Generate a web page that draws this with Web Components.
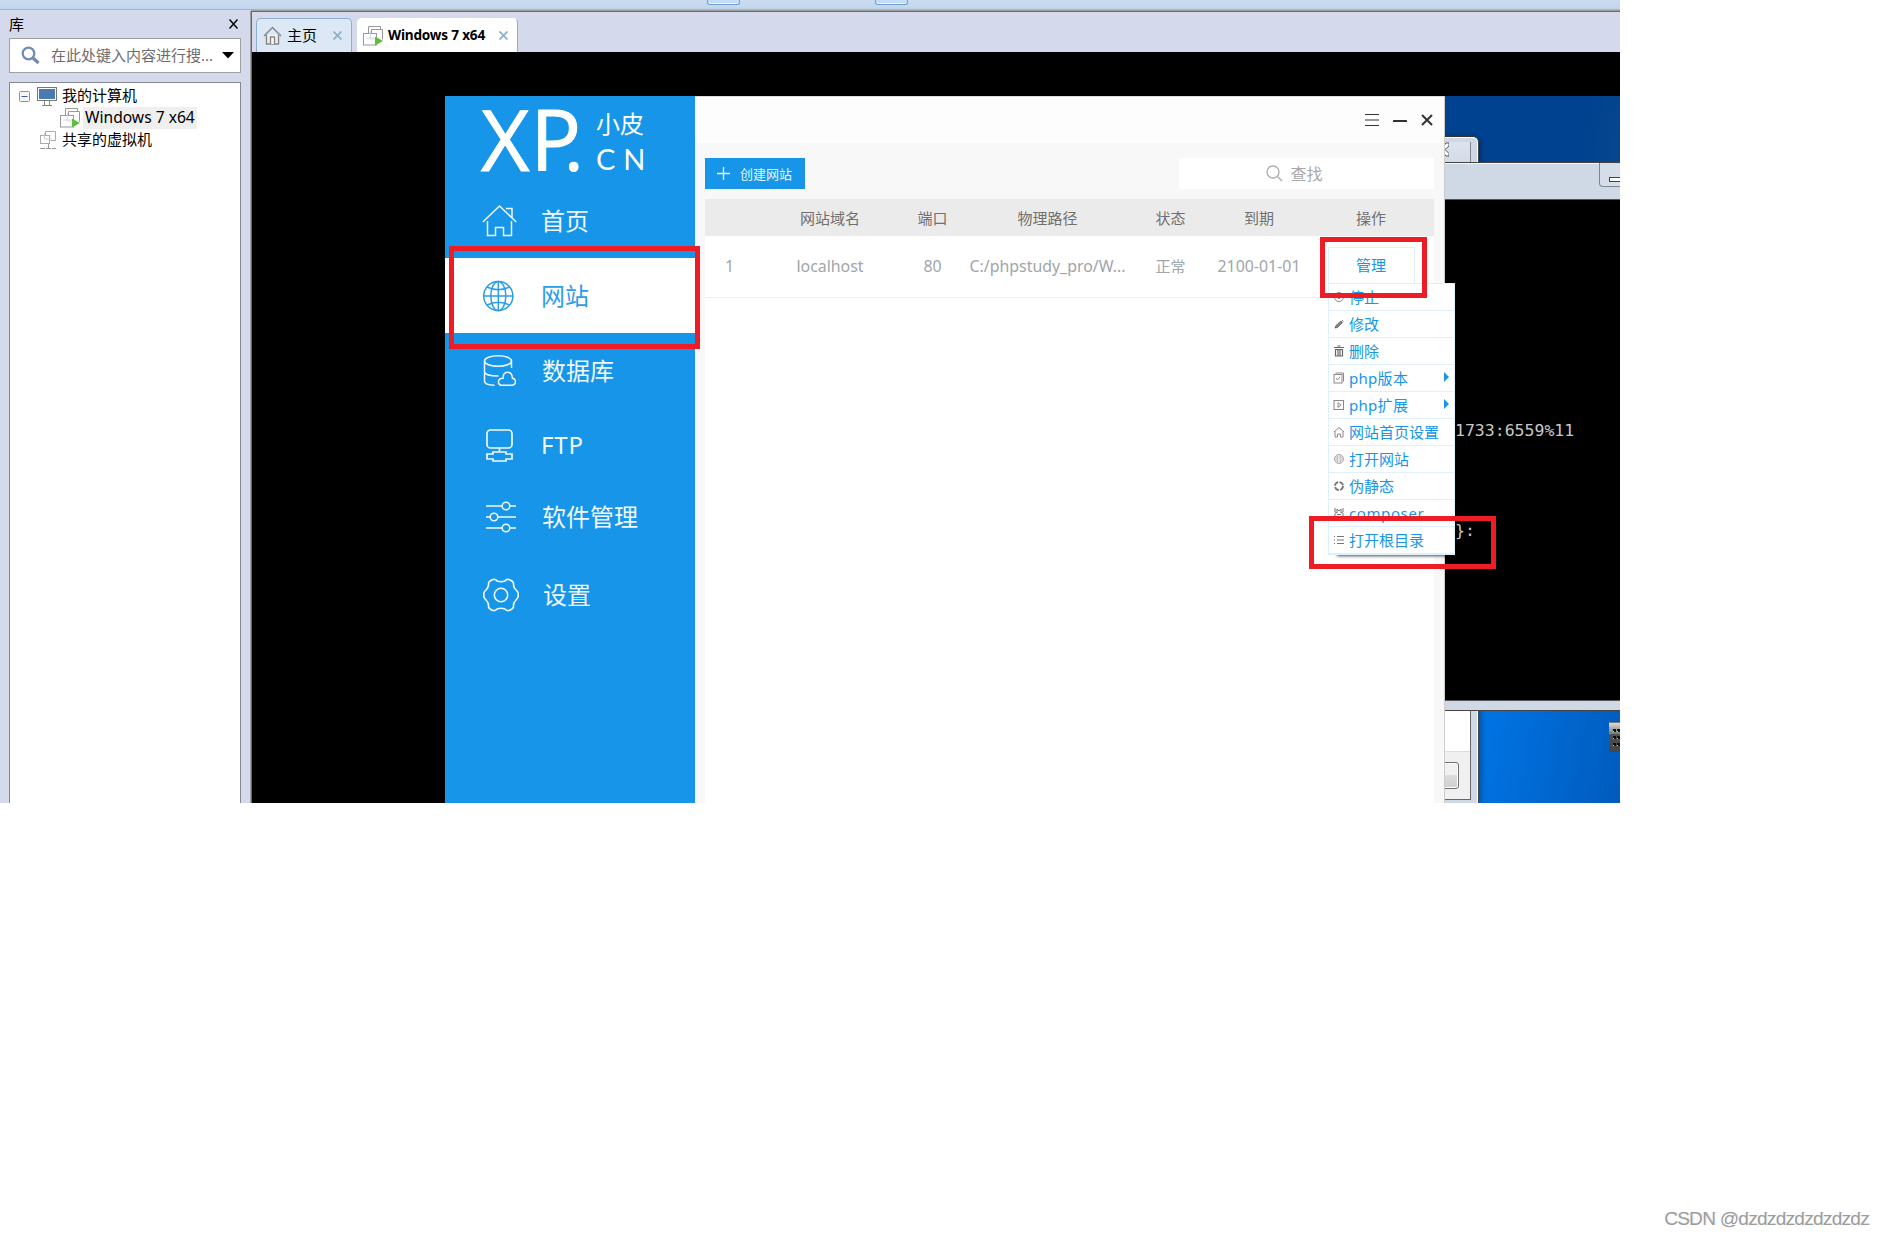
<!DOCTYPE html>
<html lang="zh-CN">
<head>
<meta charset="UTF-8">
<title>Windows 7 x64</title>
<style>
  html, body { margin: 0; width: 1885px; height: 1236px; background: #fff; overflow: hidden; }
  body { position: relative; font-family: "Noto Sans", "Noto Sans CJK SC", sans-serif; font-size: 15px; color: #000; }
  page-watermark { position: absolute; right: 16px; bottom: 5px; }
</style>
</head>
<body>
<vm-workstation></vm-workstation>
<page-watermark>CSDN @dzdzdzdzdzdzdz</page-watermark>

<script>
const base = `* { box-sizing: border-box; } svg { display: block; flex: none; }`;

const vmIcon = `
  <svg width="20" height="20" viewBox="0 0 20 20" fill="none" stroke="#999">
    <path d="M5.500 7V.5h12V3M8.500 7V3.500h11v10" stroke="#999"/>
    <rect x=".5" y="7.500" width="13" height="11.500" fill="#fff" fill-opacity=".8"/>
    <path d="M7.500 5v8h7M3 12h8" stroke="#d5dbe8"/>
    <path d="M12 10.500v9l8-4.500z" fill="#5cbf3c" stroke="none"/>
  </svg>`;

class PageWatermark extends HTMLElement {
  constructor() {
    super();
    this.attachShadow({ mode: 'open' }).innerHTML = `
      <style>
        :host { display: block; font: 19px/24px "Liberation Sans", sans-serif; letter-spacing: -0.7px;
          color: #9c9c9c; text-shadow: 1px 1px 0 #fff, 1px 0 0 #ccc; white-space: nowrap; }
      </style><slot></slot>`;
  }
}
customElements.define('page-watermark', PageWatermark);

// Red frame that highlights a step
class MarkFrame extends HTMLElement {
  constructor() {
    super();
    this.attachShadow({ mode: 'open' }).innerHTML = `
      <style>:host { display: block; box-sizing: border-box; border: 5px solid #ee1c25; }</style>`;
  }
}
customElements.define('mark-frame', MarkFrame);

class TreeRow extends HTMLElement {
  constructor() {
    super();
    this.attachShadow({ mode: 'open' }).innerHTML = `
      <style>
        ${base}
        :host { display: flex; align-items: center; height: 22px; padding-left: var(--indent, 0); white-space: nowrap; }
        .label { line-height: 20px; padding: 0 2px 2px; margin-left: 3px; }
        :host([selected]) .label { background: #efefef; font-size: 15.600px; }
      </style>
      <slot name="icon"></slot><span class="label"><slot></slot></span>`;
  }
}
customElements.define('tree-row', TreeRow);

class LibraryPane extends HTMLElement {
  constructor() {
    super();
    this.attachShadow({ mode: 'open' }).innerHTML = `
      <style>
        ${base}
        :host { display: flex; flex-direction: column; width: 251px; padding: 0 10px 0 9px; background: #d4d9ec; box-sizing: border-box; }
        .head { display: flex; justify-content: space-between; align-items: center; height: 28px; padding: 0 3px 0 0; }
        .head span { padding-bottom: 2px; }
        .search { display: flex; align-items: center; height: 35px; border: 1px solid #a0a0a0; background: #fff; padding: 0 6px 0 11px; color: #6d6d6d; white-space: nowrap; }
        .search span { flex: 1; margin-left: 11px; padding-bottom: 2px; }
        .tree { flex: 1; margin-top: 9px; border: 1px solid #828790; border-bottom: 0; background: #fff; padding-top: 2px; }
        .comp { display: flex; gap: 7px; align-items: center; }
      </style>
      <div class="head"><span>库</span>
        <svg width="9" height="10" viewBox="0 0 9 10" stroke="#000" stroke-width="1.500"><path d="M.5.500l8 9M8.500.500l-8 9"/></svg>
      </div>
      <div class="search">
        <svg width="19" height="19" viewBox="0 0 19 19" fill="none" stroke="#7388b5"><circle cx="7.500" cy="7.500" r="5.800" stroke-width="2.200"/><path d="M12 12l5.500 5" stroke-width="3.200"/></svg>
        <span>在此处键入内容进行搜...</span>
        <svg width="12" height="7" viewBox="0 0 12 7"><path d="M0 0h12L6 6.500z"/></svg>
      </div>
      <div class="tree">
        <tree-row style="--indent: 9px">
          <div class="comp" slot="icon">
            <svg width="11" height="11" viewBox="0 0 11 11"><rect x=".5" y=".5" width="10" height="10" rx="1" fill="#f6f6f6" stroke="#919191"/><path d="M2.500 5.500h6" stroke="#3c5aa5"/></svg>
            <svg width="20" height="19" viewBox="0 0 20 19"><rect x=".5" y=".5" width="19" height="13" fill="#fff" stroke="#777"/><rect x="2" y="2" width="16" height="10" fill="#4a7ab2"/><path d="M7.500 14v4M12.500 14v4M5 18.500h10" stroke="#888" fill="none"/></svg>
          </div>我的计算机</tree-row>
        <tree-row selected style="--indent: 50px">
          <div slot="icon">${vmIcon}</div>Windows 7 x64</tree-row>
        <tree-row style="--indent: 29px">
          <svg slot="icon" width="18" height="20" viewBox="0 0 18 20" fill="none" stroke="#aaa"><path d="M6.500 5V1.500h10v9h-5"/><rect x="1.500" y="5.500" width="9" height="8" fill="#fff"/><path d="M5.500 3v6h7" stroke="#ccc"/><path d="M9.500 14v5M1 18.500h5M7 18.500h5M13 18.500h4" stroke="#999"/></svg>共享的虚拟机</tree-row>
      </div>`;
  }
}
customElements.define('library-pane', LibraryPane);

class VmTab extends HTMLElement {
  constructor() {
    super();
    this.attachShadow({ mode: 'open' }).innerHTML = `
      <style>
        ${base}
        :host { display: flex; align-items: center; box-sizing: border-box; height: 34px; padding: 0 9px 0 6px;
          border: 1px solid #8bafd0; border-bottom: 0; border-radius: 5px 5px 0 0; background: #dce8f5; white-space: nowrap; }
        :host([active]) { background: #fff; border-color: #fff #8bafd0 #fff #fff; padding-left: 5px; font-weight: 700; font-size: 13.600px; letter-spacing: -.2px; }
        .text { flex: 1; margin-left: 5px; padding-bottom: 2px; }
      </style>
      <slot name="icon"></slot><span class="text"><slot></slot></span>
      <svg width="9" height="9" viewBox="0 0 9 9" stroke="#8db0cd" stroke-width="1.800"><path d="M.5.500l8 8M8.500.500l-8 8"/></svg>`;
  }
}
customElements.define('vm-tab', VmTab);

class NavItem extends HTMLElement {
  constructor() {
    super();
    this.attachShadow({ mode: 'open' }).innerHTML = `
      <style>
        ${base}
        :host { display: flex; align-items: center; color: #f0f8ff; font-size: 24px; height: 75px; padding-left: 37px; white-space: nowrap; box-sizing: border-box; }
        :host([active]) { background: #fff; color: #2b9deb; }
        .icon { width: 59px; flex: none; }
        .text { padding-bottom: 3px; }
      </style>
      <div class="icon"><slot name="icon"></slot></div><span class="text"><slot></slot></span>`;
  }
}
customElements.define('nav-item', NavItem);

class StudyNav extends HTMLElement {
  constructor() {
    super();
    this.attachShadow({ mode: 'open' }).innerHTML = `
      <style>
        ${base}
        :host { display: block; width: 250px; background: #1695e9; color: #fff; }
        .logo { display: flex; height: 87px; padding-left: 36px; }
        .xp { width: 115px; margin-top: -15px; font: 400 84px/116px "Open Sans", sans-serif; -webkit-text-stroke: 1px #fff; white-space: nowrap; }
        .xp .p { margin-left: 1px; letter-spacing: -17px; }
        .xp .dot { font-size: 74px; }
        .side { font-size: 24px; line-height: 36px; padding-top: 10px; }
        .side .cn { font: 29px/34px Lato, sans-serif; letter-spacing: 8px; }
      </style>
      <div class="logo">
        <div class="xp">X<span class="p">P<span class="dot">.</span></span></div>
        <div class="side"><div>小皮</div><div class="cn">CN</div></div>
      </div>
      <nav>
        <nav-item style="height:75px"><svg slot="icon" width="36" height="32" viewBox="0 0 36 32" fill="none" stroke="currentColor" stroke-width="1.500"><path d="M.8 17L17.500 1l16.800 16M24 3.500h6v9M5.500 16v14.500h8v-8h8v8h8V16"/></svg>首页</nav-item>
        <nav-item active><svg slot="icon" style="margin-left:1px" width="31" height="32" viewBox="0 0 31 32" fill="none" stroke="currentColor" stroke-width="1.500"><circle cx="15.300" cy="16" r="14.600"/><ellipse cx="15.300" cy="16" rx="7.500" ry="14.600"/><path d="M15.300 1.400v29.200M.7 16h29.200M4 7q11.300 5.500 22.600 0M4 25q11.300-5.500 22.600 0"/></svg>网站</nav-item>
        <nav-item style="padding-left:38px"><svg slot="icon" width="33" height="32" viewBox="0 0 33 32" fill="none" stroke="currentColor" stroke-width="1.500"><ellipse cx="15" cy="6" rx="13.500" ry="5.200"/><path d="M1.500 6v20q0 4 10 4.300M1.500 17q1 4 14 4M28.500 6v7M18 30.300q-3-1-2.500-4t4.500-3q0-6 4.500-6t5 6q3 .5 3 3.500t-3.500 3.500z"/></svg>数据库</nav-item>
        <nav-item style="height:74px; padding-top:1px; letter-spacing:.8px"><svg slot="icon" style="margin-left:4px" width="28" height="34" viewBox="0 0 28 34" fill="none" stroke="currentColor" stroke-width="1.700"><rect x="1" y="1" width="25" height="18" rx="3.500"/><path d="M13.500 19v3.500M7 23h13v2h6v5h-6v2H7v-2H1v-5h6z"/></svg>FTP</nav-item>
        <nav-item style="height:70px; padding-left:38px"><svg slot="icon" style="margin-left:2px" width="32" height="34" viewBox="0 0 32 34" fill="none" stroke="currentColor" stroke-width="1.500"><path d="M1 6h16M25 6h6M1 17h4M13 17h18M1 28h16M25 28h6"/><circle cx="21" cy="6" r="3.800"/><circle cx="9" cy="17" r="3.800"/><circle cx="21" cy="28" r="3.800"/></svg>软件管理</nav-item>
        <nav-item style="height:86px; padding-left:39px"><svg slot="icon" style="margin-left:-1px" width="36" height="34" viewBox="0 0 36 34" fill="none" stroke="currentColor" stroke-width="1.600"><path d="M10 1.500Q13 1 14 3q4 1.500 8 0q1-2 4-1.500Q30 3 30.500 5Q30 9 33 12q3 2.500 2 5q1 2-2 5q-3 3-2.500 7Q30 31 26 32.500Q23 33 22 31q-4-1.500-8 0q-1 2-4 1.500Q6 31 5.500 29Q6 25 3 22q-3-3-2-5q-1-2.500 2-5q3-3 2.500-7Q6 3 10 1.500z"/><circle cx="18" cy="17" r="6.700"/></svg>设置</nav-item>
      </nav>`;
  }
}
customElements.define('study-nav', StudyNav);

class MenuRow extends HTMLElement {
  constructor() {
    super();
    this.attachShadow({ mode: 'open' }).innerHTML = `
      <style>
        ${base}
        :host { display: flex; align-items: center; box-sizing: border-box; height: 27px; padding: 0 5px; border-bottom: 1px solid #dff0fd; color: #1695e9; white-space: nowrap; }
        .icon { width: 15.500px; color: #8a8a8a; }
        .text { flex: 1; line-height: 24px; }
        .arrow { display: none; width: 0; height: 0; margin-bottom: 2px; border: 5px solid transparent; border-left-color: #1695e9; border-right: 0; }
        :host([sub]) .arrow { display: block; }
      </style>
      <span class="icon"><slot name="icon"></slot></span><span class="text"><slot></slot></span><span class="arrow"></span>`;
  }
}
customElements.define('menu-row', MenuRow);

class SiteMenu extends HTMLElement {
  constructor() {
    super();
    this.attachShadow({ mode: 'open' });
  }

  connectedCallback() {
    const items = [
      ['停止', '<circle cx="5" cy="5" r="4.500"/><circle cx="5" cy="5" r="1.500" fill="currentColor"/>'],
      ['修改', '<path d="M1 9l1-2.500L7 2l1.500 1.500L3.500 8.500zM8 1l1.500 1.500" fill="currentColor" stroke="#555" stroke-width=".8"/>'],
      ['删除', '<path d="M0 1.500h10M3.500 0h3M1.500 3.500v6.500h7V3.500zM4 4v6M6 4v6" stroke="#666" stroke-width="1.200"/>'],
      ['php版本', '<rect x="0" y="1.500" width="8" height="8.500"/><path d="M1.500 0h8v8.500M2 5l1.500 2L6 4"/>', 'sub style="letter-spacing:.3px"'],
      ['php扩展', '<rect x="0" y=".5" width="9.500" height="9"/><path d="M4 2.500v5l3-2.500z"/>', 'sub style="letter-spacing:.3px"'],
      ['网站首页设置', '<path d="M0 5l5-4.500L10 5M1 4.500V10h2.500V7h3v3H9V4.500"/>'],
      ['打开网站', '<g stroke="#aaa"><circle cx="5" cy="5" r="4.500"/><ellipse cx="5" cy="5" rx="2" ry="4.500" stroke-width=".7"/><path d="M.5 5h9M1 3h8M1 7h8" stroke-width=".7"/></g>'],
      ['伪静态', '<circle cx="5" cy="5" r="4" stroke="#777" stroke-width="1.800" stroke-dasharray="5 1.280"/>'],
      ['composer', '<path d="M1 0v4l2 1V1l2 2 2-2v4l2-1V0M1 5v4h8V5M3 6.500h4" stroke="#777"/>', 'style="letter-spacing:.6px"'],
      ['打开根目录', '<path d="M0 1.500h1M3 1.500h7M0 5h1M3 5h7M0 8.500h1M3 8.500h7" stroke="#777"/>']
    ];
    this.shadowRoot.innerHTML = `
      <style>
        ${base}
        :host { display: block; box-sizing: border-box; width: 127px; border: 1px solid #dff0fd; background: #fff; box-shadow: 4px 6px 3px -5px rgba(0,0,0,.7); }
      </style>
      ${items.map(([label, icon, attrs]) => `
        <menu-row ${attrs || ''}><svg slot="icon" width="10" height="10" viewBox="0 0 10 10" fill="none" stroke="currentColor" style="overflow:visible">${icon}</svg>${label}</menu-row>
      `).join('')}`;
  }
}
customElements.define('site-menu', SiteMenu);

class SiteTable extends HTMLElement {
  constructor() {
    super();
    this.attachShadow({ mode: 'open' });
  }

  connectedCallback() {
    const head = ['', '网站域名', '端口', '物理路径', '状态', '到期', '操作'];
    const row = ['1', 'localhost', '80', 'C:/phpstudy_pro/W...', '正常', '2100-01-01'];
    this.shadowRoot.innerHTML = `
      <style>
        ${base}
        :host { display: block; flex: 1; background: #fff; }
        .row { display: grid; grid-template-columns: 49px 152px 53px 177px 69px 108px 116px; align-items: center; justify-items: center; white-space: nowrap; }
        .head { height: 37px; background: #ebebeb; color: #707070; }
        .body { height: 62px; border-bottom: 1px solid #eee; color: #a0a5ab; font-size: 15.900px; }
        .body > span { padding-bottom: 2px; }
        .body > span:nth-child(5) { font-size: 15px; }
        .manage { position: relative; width: 87px; height: 37px; margin-top: -2px; border: 1px solid #dff0fd; color: #1695e9; font-size: 15px; text-align: center; line-height: 35px; }
        site-menu { position: absolute; left: -1px; top: 35px; text-align: left; }
      </style>
      <div class="row head">${head.map(t => `<span>${t}</span>`).join('')}</div>
      <div class="row body">
        ${row.map(t => `<span>${t}</span>`).join('')}
        <div class="manage">管理<site-menu></site-menu></div>
      </div>`;
  }
}
customElements.define('site-table', SiteTable);

class StudyWindow extends HTMLElement {
  constructor() {
    super();
    this.attachShadow({ mode: 'open' }).innerHTML = `
      <style>
        ${base}
        :host { display: flex; background: #f8f8f8; }
        .main { flex: 1; display: flex; flex-direction: column; border-top: 1px solid #ddd; border-right: 1px solid #ccc; }
        .title { display: flex; justify-content: flex-end; align-items: center; gap: 14px; height: 46px; padding: 0 11px 1px 0; background: #fdfdfd; }
        .content { flex: 1; display: flex; flex-direction: column; padding: 15px 10px 0; }
        .tools { display: flex; justify-content: space-between; height: 31px; margin-bottom: 10px; }
        .create { display: flex; align-items: center; gap: 10px; width: 100px; padding-left: 12px; background: #1695e9; color: #e9f5ff; font-size: 13px; }
        .find { display: flex; align-items: center; justify-content: center; gap: 7px; width: 255px; padding-right: 24px; background: #fff; color: #a9a9a9; font-size: 16px; }
        .find span { padding-bottom: 2px; }
      </style>
      <study-nav></study-nav>
      <div class="main">
        <div class="title">
          <svg width="14" height="12" viewBox="0 0 14 12" stroke="#333"><path d="M0 .5h14M0 6h14M0 11.500h14"/></svg>
          <svg width="14" height="12" viewBox="0 0 14 12" stroke="#333"><path d="M0 7h14" stroke-width="2"/></svg>
          <svg width="12" height="12" viewBox="0 0 12 12" stroke="#333" stroke-width="2"><path d="M1 1l10 10M11 1L1 11"/></svg>
        </div>
        <div class="content">
          <div class="tools">
            <div class="create"><svg width="13" height="13" viewBox="0 0 13 13" stroke="#e9f5ff" stroke-width="1.300"><path d="M6.500 0v13M0 6.500h13"/></svg>创建网站</div>
            <div class="find"><svg width="17" height="17" viewBox="0 0 17 17" fill="none" stroke="#b0b0b0" stroke-width="1.400"><circle cx="7" cy="7" r="6"/><path d="M11.500 11.500l4.500 4.500"/></svg><span>查找</span></div>
          </div>
          <site-table></site-table>
        </div>
      </div>`;
  }
}
customElements.define('study-window', StudyWindow);

// Guest desktop, 1175x707, windows are placed freely on it
class GuestDesktop extends HTMLElement {
  constructor() {
    super();
    this.attachShadow({ mode: 'open' }).innerHTML = `
      <style>
        ${base}
        :host { display: block; position: relative; background: linear-gradient(100deg, #004290 88%, #134d8c 97%, #0b4583); }
        .wall { position: absolute; left: 1000px; right: 0; top: 612px; bottom: 0; background: linear-gradient(100deg, #0074e4 20%, #005bbd); }
        .dialog { position: absolute; left: 900px; width: 134px; background: #cfd9e5; border-right: 1px solid #404550; }
        .upper { top: 40px; height: 40px; border-top: 1px solid #333; border-radius: 0 6px 0 0; box-shadow: inset 0 1px #fff, inset -1px 0 #fff, 1px 1px 5px #0006; }
        .upper .ctl { width: 126px; height: 25px; border: 1px solid #7d8794; border-top: 0; border-radius: 0 0 4px 4px; background: linear-gradient(#dde3ee, #d2d8e6); }
        .upper svg { margin: 5px 0 0 91px; }
        .lower { top: 600px; bottom: 0; padding: 0 7px 3px 0; box-shadow: inset -1px 0 #fff, 2px 0 6px #0005; }
        .lower .body { display: flex; flex-direction: column; justify-content: flex-end; height: 100%; border: 1px solid #666; background: #fff; }
        .lower .foot { display: flex; align-items: center; justify-content: flex-end; height: 48px; padding: 0 11px 0 0; border-top: 1px solid #ddd; background: #f0f0f0; }
        .lower .btn { width: 80px; height: 27px; border: 1px solid #707070; border-radius: 3px; background: linear-gradient(#f1f1f1 48%, #dcdcdc 50%, #cfcfcf); box-shadow: inset 0 0 0 1px #fff; }
        .console { position: absolute; left: 960px; right: 0; top: 66px; height: 549px; padding: 36px 0 9px; border: 1px solid #444; border-right: 0; background: #cfd9e5; box-shadow: inset 0 1px #f5f8fb; }
        .screen { height: 100%; border: 1px solid #555; border-right: 0; background: #000; color: #c8c8c8; font: 16.500px/20px "DejaVu Sans Mono", monospace; }
        .screen div { padding-left: 48px; }
        .min { position: absolute; right: 0; top: 0; width: 21px; height: 24px; border: 1px solid #7d8794; border-width: 0 0 1px 1px; border-radius: 0 0 0 4px; padding: 14px 0 0 9px; background: #d5dde8; }
        .min i { display: block; height: 5px; border: 1px solid #444; border-right: 0; background: #fff; }
        .gadget { position: absolute; right: 0; top: 626px; width: 11px; height: 30px; border-top: 1px solid #777; }
        study-window { position: absolute; left: 0; top: 0; width: 1000px; height: 707px; }
      </style>
      <div class="wall"></div>
      <div class="dialog upper"><div class="ctl"><svg width="12" height="15" viewBox="0 0 12 15" fill="#fff" stroke="#555"><path d="M0 1h3l3 4 3-4h3v3L8 7.500l4 4V14H9L6 10"/></svg></div></div>
      <div class="dialog lower"><div class="body"><div class="foot"><div class="btn"></div></div></div></div>
      <div class="console">
        <div class="screen">
          <div style="padding-top:221px">1733:6559%11</div>
          <div style="padding-top:80px">}:</div>
        </div>
        <div class="min"><i></i></div>
      </div>
      <div class="gadget"><svg width="11" height="29" viewBox="0 0 11 29"><defs><linearGradient id="g" x2="0" y2="1"><stop stop-color="#ddd"/><stop offset=".38" stop-color="#777"/><stop offset=".4" stop-color="#505050"/><stop offset="1" stop-color="#454545"/></linearGradient></defs><path fill="url(#g)" d="M0 0h11v29H0z"/><path fill="#111" d="M4 6h3v3H4zM8 6h3v3H8zM4 13h3v3H4zM8 13h3v3H8zM4 20h3v3H4zM8 20h3v3H8z"/><path fill="#ccc" d="M4 8h1v1H4zM8 8h1v1H8zM4 15h1v1H4zM8 15h1v1H8zM4 22h1v1H4zM8 22h1v1H8z"/></svg></div>
      <study-window></study-window>`;
  }
}
customElements.define('guest-desktop', GuestDesktop);

class VmWorkstation extends HTMLElement {
  constructor() {
    super();
    this.attachShadow({ mode: 'open' }).innerHTML = `
      <style>
        ${base}
        :host { display: flex; flex-direction: column; position: relative; width: 1620px; height: 803px; overflow: hidden; background: #d4d9ec; }
        .bar { display: flex; height: 10px; gap: 135px; padding-left: 707px; border-bottom: 1px solid #98b8d8; background: linear-gradient(#cbdcf0, #c0d5ec); }
        .bar i { width: 33px; height: 5px; border: 1px solid #719fd2; border-top: 0; border-radius: 0 0 3px 3px; background: #c5dcf8; box-shadow: inset 0 -1px #eef5ff; }
        .body { flex: 1; display: flex; min-height: 0; }
        .work { flex: 1; display: flex; flex-direction: column; border-left: 1px solid #696969; margin-top: 1px; border-top: 1px solid #696969; box-shadow: 0 -1px #a0a0a0, -1px 0 #a0a0a0; }
        .tabs { display: flex; align-items: flex-end; gap: 5px; height: 40px; padding-left: 4px; }
        .stage { flex: 1; background: #000; padding: 44px 0 0 193px; }
        guest-desktop { width: 1175px; height: 707px; }
        mark-frame { position: absolute; }
      </style>
      <div class="bar"><i></i><i></i></div>
      <div class="body">
        <library-pane></library-pane>
        <div class="work">
          <div class="tabs">
            <vm-tab style="width:96px"><svg slot="icon" width="19" height="19" viewBox="0 0 19 19" fill="#f4f4f4" stroke="#888" stroke-width="1.500"><path d="M3.500 9v9h12V9"/><path d="M1 10l8.500-8.500L18 10" fill="none"/><path d="M7.500 18v-7h4v7" fill="#fff"/></svg>主页</vm-tab>
            <vm-tab active style="width:161px"><div slot="icon">${vmIcon}</div>Windows 7 x64</vm-tab>
          </div>
          <div class="stage"><guest-desktop></guest-desktop></div>
        </div>
      </div>
      <mark-frame style="left:449px; top:246px; width:251px; height:103px"></mark-frame>
      <mark-frame style="left:1320px; top:237px; width:107px; height:61px"></mark-frame>
      <mark-frame style="left:1309px; top:516px; width:187px; height:53px"></mark-frame>`;
  }
}
customElements.define('vm-workstation', VmWorkstation);
</script>
</body>
</html>
